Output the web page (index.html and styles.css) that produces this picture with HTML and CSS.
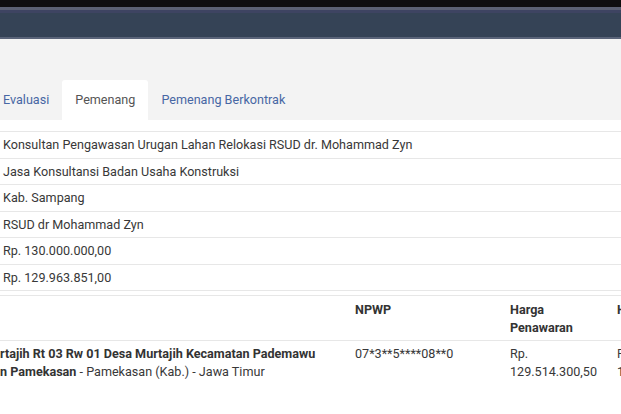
FILE: index.html
```html
<!DOCTYPE html>
<html lang="id">
<head>
<meta charset="utf-8">
<title>Pemenang</title>
<link rel="stylesheet" href="styles.css">
</head>
<body>
  <div class="topbar"></div>
  <div class="strip"></div>
  <header class="navbar"></header>

  <nav class="tabs">
    <a class="tab">Evaluasi</a>
    <a class="tab active">Pemenang</a>
    <a class="tab">Pemenang Berkontrak</a>
  </nav>

  <section class="panel">
    <table class="info">
      <tr><td>Konsultan Pengawasan Urugan Lahan Relokasi RSUD dr. Mohammad Zyn</td></tr>
      <tr><td>Jasa Konsultansi Badan Usaha Konstruksi</td></tr>
      <tr><td>Kab. Sampang</td></tr>
      <tr><td>RSUD dr Mohammad Zyn</td></tr>
      <tr><td>Rp. 130.000.000,00</td></tr>
      <tr><td>Rp. 129.963.851,00</td></tr>
    </table>

    <table class="winners">
      <colgroup>
        <col class="c-addr">
        <col class="c-npwp">
        <col class="c-price">
        <col class="c-fix">
      </colgroup>
      <thead>
        <tr>
          <th></th>
          <th>NPWP</th>
          <th>Harga Penawaran</th>
          <th class="single">Harga Terkoreksi</th>
        </tr>
      </thead>
      <tbody>
        <tr>
          <td class="addr"><b>rtajih Rt 03 Rw 01 Desa Murtajih Kecamatan Pademawu<br>n Pamekasan</b> - Pamekasan (Kab.) - Jawa Timur</td>
          <td>07*3**5****08**0</td>
          <td>Rp. 129.514.300,50</td>
          <td>Rp. 129.514.300,50</td>
        </tr>
      </tbody>
    </table>
  </section>
</body>
</html>
```

FILE: styles.css
```css
html, body {
  margin: 0;
  padding: 0;
}

body {
  width: 621px;
  height: 414px;
  overflow: hidden;
  background: #f3f3f3;
  font-family: Roboto, "Liberation Sans", sans-serif;
  font-size: 12.6px;
  color: #383838;
}

/* window chrome above the app bar */
.topbar {
  height: 7px;
  background: #0e0e0e;
}

.strip {
  height: 3px;
  background: #5b6172;
}

.navbar {
  height: 24px;
  background: #354356;
  border-top: 3px solid #3e4462;
  border-bottom: 2px solid #5a6479;
}

/* tab strip */
.tabs {
  display: flex;
  padding-top: 41px;
  margin-left: -10px;
}

.tab {
  padding: 0 13px;
  line-height: 40px;
  color: #4767a4;
  cursor: pointer;
}

.tab.active {
  background: #fff;
  color: #555;
  border-radius: 3px 3px 0 0;
}

/* tab content */
.panel {
  background: #fff;
  padding-top: 11px;
  height: 300px;
}

.info {
  width: 100%;
  border-collapse: collapse;
}

.info td {
  padding: 4px 8px 4px 3px;
  line-height: 17.5px;
  border-top: 1px solid #e7e7e7;
  border-bottom: 1px solid #e7e7e7;
  white-space: nowrap;
}

.winners {
  margin-top: 4px;
  width: 716px;
  table-layout: fixed;
  border-collapse: collapse;
}

.c-addr { width: 347px; }
.c-npwp { width: 155px; }
.c-price { width: 107px; }
.c-fix { width: 107px; }

.winners th,
.winners td {
  text-align: left;
  vertical-align: top;
  padding: 4px 8px;
  line-height: 17.5px;
}

.winners th {
  font-weight: 700;
  color: #333;
  border-top: 1px solid #e7e7e7;
  border-bottom: 1px solid #e7e7e7;
  padding-top: 5px;
}

.winners th.single {
  white-space: nowrap;
}

.winners td.addr {
  padding-left: 0;
  white-space: nowrap;
}

.addr b {
  font-weight: 700;
  color: #333;
}
```
